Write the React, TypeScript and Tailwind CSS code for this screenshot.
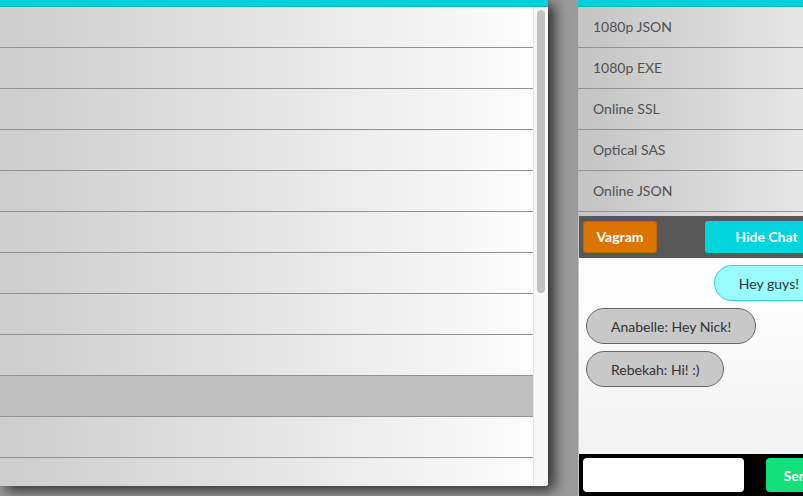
import React from "react";

const rows = Array.from({ length: 12 }, (_, i) => i);
const menu = ["1080p JSON", "1080p EXE", "Online SSL", "Optical SAS", "Online JSON"];

export default function App() {
  return (
    <div
      className="w-[803px] h-[496px] overflow-hidden bg-[#9a9a9a] flex items-start"
      style={{ fontFamily: "Lato, 'Open Sans', sans-serif" }}
    >
      {/* List panel */}
      <div className="w-[548px] h-[486px] shrink-0 flex flex-col bg-white rounded-br-[3px] overflow-hidden shadow-[6px_4px_14px_rgba(0,0,0,0.75)]">
        <div className="h-[7px] shrink-0 bg-[#00d2da] border-b border-[#00b9c1]" />
        <div className="flex flex-1 min-h-0">
          <div className="w-[533px] flex flex-col overflow-hidden">
            {rows.map((r) => (
              <div
                key={r}
                className={
                  r === 9
                    ? "h-[41px] shrink-0 border-b border-[#919191] bg-[#bfbfbf]"
                    : "h-[41px] shrink-0 border-b border-[#919191] bg-gradient-to-r from-[#cdcdcd] to-[#fdfdfd]"
                }
              />
            ))}
          </div>
          <div className="flex-1 bg-[#f8f8f8] border-l border-[#e6e6e6] pt-[3px] pl-[3px]">
            <div className="w-[8px] h-[283px] rounded-full bg-[#c2c2c2]" />
          </div>
        </div>
      </div>

      {/* Right panel */}
      <div className="ml-[30px] w-[258px] h-[496px] shrink-0 flex flex-col bg-gradient-to-r from-[#c4c4c4] to-[#ececec]">
        <div className="h-[7px] shrink-0 bg-[#00d2da] border-b border-[#00b9c1]" />
        {menu.map((m) => (
          <div
            key={m}
            className="h-[41px] shrink-0 flex items-center pl-[15px] pb-[2px] text-[14px] text-[#505050] border-b border-[#919191]"
          >
            {m}
          </div>
        ))}
        <div className="mt-[4px] ml-[1px] flex-1 flex flex-col">
          <div className="h-[42px] shrink-0 bg-[#585858] flex items-start justify-between px-[4px] pt-[5px]">
            <button className="w-[74px] h-[32px] pb-[2px] rounded-[3px] bg-[#dc7400] border border-[#c46400] text-white font-bold text-[14px]">
              Vagram
            </button>
            <button className="w-[127px] h-[32px] pb-[2px] pr-[4px] rounded-[3px] bg-[#00d4dc] text-white font-bold text-[14px]">
              Hide Chat
            </button>
          </div>
          <div className="flex-1 bg-gradient-to-b from-white to-[#f3f3f3] flex flex-col px-[7px] pt-[7px] gap-[7px]">
            <div className="self-end mr-[5px] h-[36px] px-[24px] rounded-full bg-[#99fbff] border border-[#2ad6dd] flex items-center text-[14px] text-[#333]">
              Hey guys!
            </div>
            <div className="self-start h-[36px] px-[24px] rounded-full bg-[#c8c8c8] border border-[#666] flex items-center text-[14px] text-[#333]">
              Anabelle: Hey Nick!
            </div>
            <div className="self-start h-[36px] px-[24px] rounded-full bg-[#c8c8c8] border border-[#666] flex items-center text-[14px] text-[#333]">
              Rebekah: Hi! :)
            </div>
          </div>
          <div className="h-[42px] shrink-0 bg-black flex items-start px-[4px] pt-[4px] gap-[22px]">
            <input className="w-[161px] h-[34px] rounded-[4px] bg-white outline-none" />
            <button className="w-[66px] h-[34px] rounded-[4px] bg-[#12e07a] text-white font-bold text-[14px]">
              Send
            </button>
          </div>
        </div>
      </div>
    </div>
  );
}
